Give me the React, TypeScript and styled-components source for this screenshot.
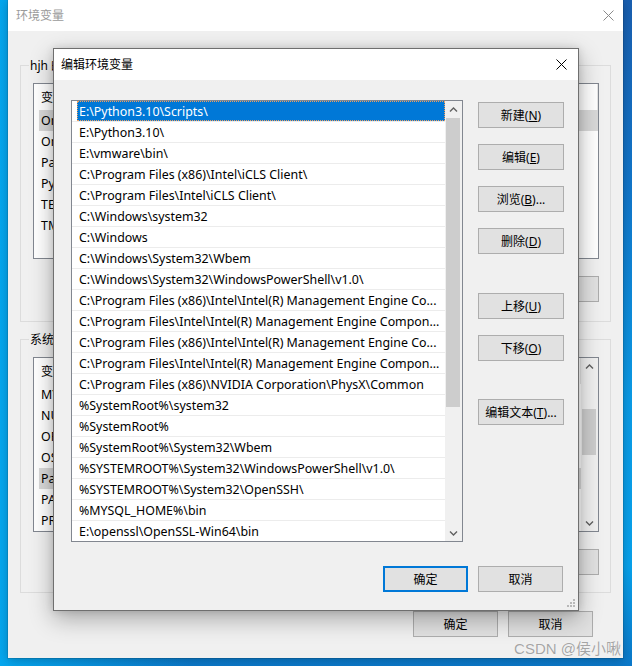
import React from "react";
import styled, { createGlobalStyle } from "styled-components";

const FONT = `"Noto Sans", "Noto Sans CJK SC", sans-serif`;

const GlobalStyle = createGlobalStyle`
  html, body { margin: 0; padding: 0; }
  body {
    width: 632px;
    height: 666px;
    overflow: hidden;
    font-family: ${FONT};
    font-size: 12px;
    color: #000;
  }
  * { box-sizing: border-box; }
`;

const Desktop = styled.div`
  position: relative;
  width: 632px;
  height: 666px;
  padding: 0 9px 8px 8px;
  overflow: hidden;
  background:
    linear-gradient(90deg, #05a7ef 0%, rgba(5, 167, 239, 0) 30%),
    linear-gradient(180deg, #1a5fb0 0%, #1178cc 30%, #0b9be6 60%, #08a2ec 85%, #0b78c9 100%);
`;

const Window = styled.div`
  width: 615px;
  height: 658px;
  background: #f0f0f0;
  display: flex;
  flex-direction: column;
  box-shadow: 0 0 0 1px rgba(0, 0, 0, 0.1), 0 2px 10px rgba(0, 0, 0, 0.25);
`;

const TitleBar = styled.div<{ $padL: number; $padR: number }>`
  height: 31px;
  flex: none;
  background: #fff;
  display: flex;
  align-items: center;
  justify-content: space-between;
  padding: 0 ${(p) => p.$padR}px 0 ${(p) => p.$padL}px;
`;

const TitleText = styled.span<{ $inactive?: boolean }>`
  font-size: 12px;
  line-height: 16px;
  color: ${(p) => (p.$inactive ? "#9a9a9a" : "#000")};
`;

const CloseIcon = ({ color }: { color: string }) => (
  <svg width="11" height="11" viewBox="0 0 11 11">
    <path d="M0.5 0.5 L10.5 10.5 M10.5 0.5 L0.5 10.5" stroke={color} strokeWidth="1" fill="none" />
  </svg>
);

const WindowBody = styled.div`
  flex: 1;
  display: flex;
  flex-direction: column;
  padding: 34px 12px 0 12px;
`;

const GroupBox = styled.div<{ $mt?: number; $pb: number }>`
  position: relative;
  border: 1px solid #dcdcdc;
  margin-top: ${(p) => p.$mt ?? 0}px;
  padding: 17px 11px ${(p) => p.$pb}px 12px;
  display: flex;
  flex-direction: column;
  gap: 17px;
`;

const Legend = styled.span`
  position: absolute;
  top: -8px;
  left: 8px;
  padding: 0 1px;
  line-height: 16px;
  background: #f0f0f0;
  white-space: nowrap;
`;

const ListView = styled.div<{ $h: number }>`
  height: ${(p) => p.$h}px;
  border: 1px solid #828790;
  background: #fff;
  display: flex;
  overflow: hidden;
`;

const ListColumn = styled.div`
  flex: 1;
  display: flex;
  flex-direction: column;
  min-width: 0;
`;

const ListHeader = styled.div`
  height: 26px;
  flex: none;
  display: flex;
  align-items: center;
  background: #fff;
`;

const HeaderCell = styled.div<{ $w?: number }>`
  width: ${(p) => (p.$w ? `${p.$w}px` : "auto")};
  flex: ${(p) => (p.$w ? "none" : "1")};
  padding-left: 7px;
  height: 100%;
  display: flex;
  align-items: center;
  border-right: 1px solid #e5e5e5;
`;

const ListItem = styled.div<{ $sel?: boolean }>`
  height: 21px;
  flex: none;
  display: flex;
  align-items: center;
  margin-left: 5px;
  padding-left: 2px;
  white-space: nowrap;
  font-size: 12.4px;
  background: ${(p) => (p.$sel ? "#d9d9d9" : "transparent")};
`;

const ScrollBar = styled.div`
  width: 17px;
  flex: none;
  background: #f0f0f0;
  display: flex;
  flex-direction: column;
`;

const ArrowBox = styled.div`
  height: 17px;
  flex: none;
  display: flex;
  align-items: center;
  justify-content: center;
`;

const Track = styled.div<{ $before: number }>`
  flex: 1;
  display: flex;
  flex-direction: column;
  padding-top: ${(p) => p.$before}px;
`;

const Thumb = styled.div<{ $h: number }>`
  height: ${(p) => p.$h}px;
  margin: 0 2px 0 1px;
  background: #cdcdcd;
`;

const Chevron = ({ down }: { down?: boolean }) => (
  <svg width="9" height="6" viewBox="0 0 9 6">
    <polyline
      points={down ? "1,1.5 4.5,5 8,1.5" : "1,4.5 4.5,1 8,4.5"}
      fill="none"
      stroke="#606060"
      strokeWidth="1.4"
    />
  </svg>
);

const ButtonRow = styled.div`
  display: flex;
  justify-content: flex-end;
  gap: 10px;
`;

const WinButton = styled.button<{ $w?: number; $default?: boolean; $mt?: number }>`
  width: ${(p) => p.$w ?? 86}px;
  height: 26px;
  flex: none;
  margin: ${(p) => p.$mt ?? 0}px 0 0 0;
  padding: 0;
  background: #e1e1e1;
  border: ${(p) => (p.$default ? "2px solid #0078d7" : "1px solid #adadad")};
  font-family: ${FONT};
  font-size: 12px;
  color: #000;
  display: flex;
  align-items: center;
  justify-content: center;
  white-space: nowrap;
`;

const Key = styled.span`
  text-decoration: underline;
  text-underline-offset: 1px;
`;

const Footer = styled.div`
  display: flex;
  justify-content: flex-end;
  gap: 10px;
  margin-top: 18px;
  padding-right: 18px;
`;

/* ---------- Dialog ---------- */

const Dialog = styled.div`
  position: absolute;
  left: 53px;
  top: 48px;
  width: 526px;
  height: 563px;
  border: 1px solid #6f6f6f;
  background: #f0f0f0;
  display: flex;
  flex-direction: column;
  box-shadow: 0 8px 22px rgba(0, 0, 0, 0.3), 0 0 8px rgba(0, 0, 0, 0.12);
`;

const DialogBody = styled.div`
  flex: 1;
  display: grid;
  grid-template-columns: 392px 86px;
  grid-template-rows: 442px 26px;
  column-gap: 15px;
  row-gap: 24px;
  padding: 20px 14px 0 17px;
`;

const PathBox = styled.div`
  border: 1px solid #828790;
  background: #fff;
  display: flex;
  overflow: hidden;
`;

const PathRows = styled.div`
  flex: 1;
  min-width: 0;
  display: flex;
  flex-direction: column;
`;

const PathRow = styled.div`
  height: 21px;
  flex: none;
  display: flex;
  border-bottom: 1px solid #ececec;
`;

const PathLabel = styled.div<{ $sel?: boolean }>`
  flex: 1;
  min-width: 0;
  margin-left: 5px;
  padding-left: 2px;
  display: flex;
  align-items: center;
  white-space: nowrap;
  overflow: hidden;
  font-size: 12.4px;
  color: ${(p) => (p.$sel ? "#fff" : "#000")};
  background: ${(p) => (p.$sel ? "#0078d7" : "transparent")};
  outline: ${(p) => (p.$sel ? "1px dotted #f0a060" : "none")};
  outline-offset: -1px;
`;

const SideButtons = styled.div`
  display: flex;
  flex-direction: column;
  gap: 16px;
  padding-top: 2px;
`;

const DialogFooter = styled.div`
  grid-column: 1 / -1;
  display: flex;
  justify-content: flex-end;
  gap: 10px;
  padding-right: 1px;
`;

const Grip = styled.div`
  position: absolute;
  right: 3px;
  bottom: 3px;
  width: 9px;
  height: 9px;
  display: flex;
`;

const GripIcon = () => (
  <svg width="9" height="9" viewBox="0 0 9 9">
    {[
      [6, 0],
      [3, 3],
      [6, 3],
      [0, 6],
      [3, 6],
      [6, 6],
    ].map(([x, y], i) => (
      <rect key={i} x={x + 1} y={y + 1} width="2" height="2" fill="#b8b8b8" />
    ))}
  </svg>
);

const Watermark = styled.div`
  position: absolute;
  right: 11px;
  bottom: 8px;
  font-family: "Liberation Sans", "Noto Sans CJK SC", sans-serif;
  font-size: 15px;
  line-height: 18px;
  color: rgba(150, 150, 150, 0.85);
  text-shadow: 0 0 1px rgba(255, 255, 255, 0.8);
  white-space: nowrap;
`;

const paths = [
  "E:\\Python3.10\\Scripts\\",
  "E:\\Python3.10\\",
  "E:\\vmware\\bin\\",
  "C:\\Program Files (x86)\\Intel\\iCLS Client\\",
  "C:\\Program Files\\Intel\\iCLS Client\\",
  "C:\\Windows\\system32",
  "C:\\Windows",
  "C:\\Windows\\System32\\Wbem",
  "C:\\Windows\\System32\\WindowsPowerShell\\v1.0\\",
  "C:\\Program Files (x86)\\Intel\\Intel(R) Management Engine Co...",
  "C:\\Program Files\\Intel\\Intel(R) Management Engine Compon...",
  "C:\\Program Files (x86)\\Intel\\Intel(R) Management Engine Co...",
  "C:\\Program Files\\Intel\\Intel(R) Management Engine Compon...",
  "C:\\Program Files (x86)\\NVIDIA Corporation\\PhysX\\Common",
  "%SystemRoot%\\system32",
  "%SystemRoot%",
  "%SystemRoot%\\System32\\Wbem",
  "%SYSTEMROOT%\\System32\\WindowsPowerShell\\v1.0\\",
  "%SYSTEMROOT%\\System32\\OpenSSH\\",
  "%MYSQL_HOME%\\bin",
  "E:\\openssl\\OpenSSL-Win64\\bin",
];

const userVars = ["OneDrive", "OneDriveConsumer", "Path", "PyCharm", "TEMP", "TMP"];
const sysVars = [
  "MYSQL_HOME",
  "NUMBER_OF_PROCESSORS",
  "OPENSSL_CONF",
  "OS",
  "Path",
  "PATHEXT",
  "PROCESSOR_ARCHITECTURE",
];

const Btn = ({ label, k, tail, ...rest }: { label: string; k?: string; tail?: string } & React.ComponentProps<typeof WinButton>) => (
  <WinButton {...rest}>
    {label}
    {k && (
      <>
        (<Key>{k}</Key>){tail}
      </>
    )}
  </WinButton>
);

export default function App() {
  return (
    <>
      <GlobalStyle />
      <Desktop>
        <Window>
          <TitleBar $padL={8} $padR={9}>
            <TitleText $inactive>环境变量</TitleText>
            <CloseIcon color="#8a8a8a" />
          </TitleBar>
          <WindowBody>
            <GroupBox $pb={19}>
              <Legend>hjh 的用户变量(U)</Legend>
              <ListView $h={176}>
                <ListColumn>
                  <ListHeader>
                    <HeaderCell $w={150}>变量</HeaderCell>
                    <HeaderCell>值</HeaderCell>
                  </ListHeader>
                  {userVars.map((v, i) => (
                    <ListItem key={v} $sel={i === 0}>
                      {v}
                    </ListItem>
                  ))}
                </ListColumn>
              </ListView>
              <ButtonRow>
                <Btn label="新建" k="N" tail="..." />
                <Btn label="编辑" k="E" tail="..." />
                <Btn label="删除" k="D" />
              </ButtonRow>
            </GroupBox>
            <GroupBox $mt={17} $pb={17}>
              <Legend>系统变量(S)</Legend>
              <ListView $h={175}>
                <ListColumn>
                  <ListHeader>
                    <HeaderCell $w={150}>变量</HeaderCell>
                    <HeaderCell>值</HeaderCell>
                  </ListHeader>
                  {sysVars.map((v, i) => (
                    <ListItem key={v} $sel={i === 4}>
                      {v}
                    </ListItem>
                  ))}
                </ListColumn>
                <ScrollBar>
                  <ArrowBox>
                    <Chevron />
                  </ArrowBox>
                  <Track $before={34}>
                    <Thumb $h={46} />
                  </Track>
                  <ArrowBox>
                    <Chevron down />
                  </ArrowBox>
                </ScrollBar>
              </ListView>
              <ButtonRow>
                <Btn label="新建" k="W" tail="..." />
                <Btn label="编辑" k="I" tail="..." />
                <Btn label="删除" k="L" />
              </ButtonRow>
            </GroupBox>
            <Footer>
              <Btn label="确定" $w={85} />
              <Btn label="取消" $w={85} />
            </Footer>
          </WindowBody>
        </Window>

        <Dialog>
          <TitleBar $padL={7} $padR={11}>
            <TitleText>编辑环境变量</TitleText>
            <CloseIcon color="#000" />
          </TitleBar>
          <DialogBody>
            <PathBox>
              <PathRows>
                {paths.map((p, i) => (
                  <PathRow key={i}>
                    <PathLabel $sel={i === 0}>{p}</PathLabel>
                  </PathRow>
                ))}
              </PathRows>
              <ScrollBar>
                <ArrowBox>
                  <Chevron />
                </ArrowBox>
                <Track $before={0}>
                  <Thumb $h={289} />
                </Track>
                <ArrowBox>
                  <Chevron down />
                </ArrowBox>
              </ScrollBar>
            </PathBox>
            <SideButtons>
              <Btn label="新建" k="N" />
              <Btn label="编辑" k="E" />
              <Btn label="浏览" k="B" tail="..." />
              <Btn label="删除" k="D" />
              <Btn label="上移" k="U" $mt={23} />
              <Btn label="下移" k="O" />
              <Btn label="编辑文本" k="T" tail="..." $mt={22} />
            </SideButtons>
            <DialogFooter>
              <Btn label="确定" $w={85} $default />
              <Btn label="取消" $w={85} />
            </DialogFooter>
          </DialogBody>
          <Grip>
            <GripIcon />
          </Grip>
        </Dialog>

        <Watermark>CSDN @侯小啾</Watermark>
      </Desktop>
    </>
  );
}
